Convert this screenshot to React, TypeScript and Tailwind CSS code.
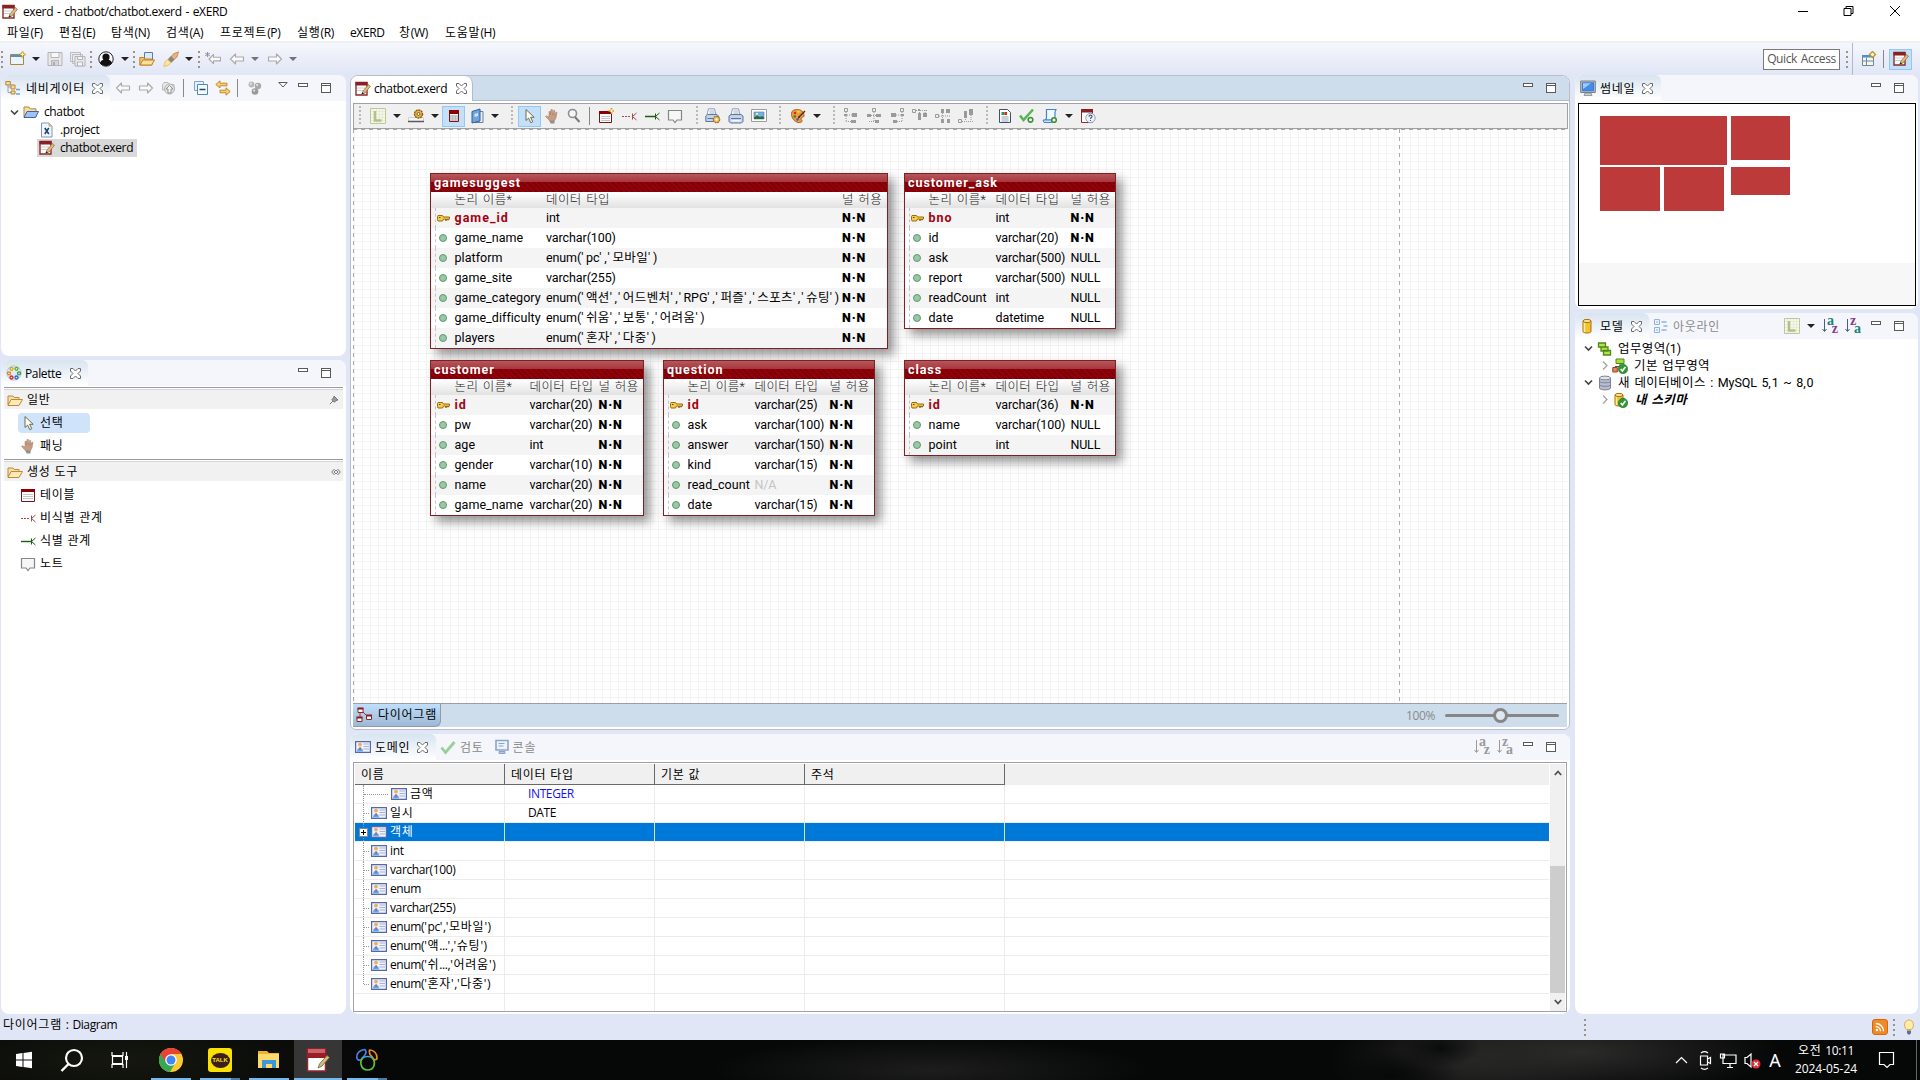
import React from "react";

type Kids = { children?: React.ReactNode };

/* ---------- text ---------- */

// Hangul, spaces, quotes and Latin runs get their own tracking to keep an even rhythm.
function T({ s, c = "" }: { s: string; c?: string }) {
  const runs = s.split(/([\uac00-\ud7a3]+|'+| +)/).filter(Boolean);
  return (
    <span className={"whitespace-pre " + c}>
      {runs.map((r, i) => (
        <span
          key={i}
          className={
            /[\uac00-\ud7a3]/.test(r)
              ? "tracking-[0.75px]"
              : r[0] === "'"
                ? "tracking-[0.6px]"
                : r[0] === " "
                  ? "tracking-[0.7px]"
                  : "tracking-[-0.38px]"
          }
        >
          {r}
        </span>
      ))}
    </span>
  );
}

// Wide variant used in the diagram and the model tree.
function G({ s, c = "" }: { s: string; c?: string }) {
  const runs = s.split(/([\uac00-\ud7a3]+|'|,| +)/).filter(Boolean);
  return (
    <span className={"font-['Roboto','Noto_Sans_CJK_KR',sans-serif] text-[12.5px] whitespace-pre " + c}>
      {runs.map((r, i) => (
        <span
          key={i}
          className={
            /[\uac00-\ud7a3]/.test(r)
              ? "tracking-[0.4px]"
              : r === "'"
                ? "tracking-[2.6px]"
                : r === ","
                  ? "tracking-[1px]"
                  : r[0] === " "
                    ? "tracking-[1.4px]"
                    : "tracking-[-0.1px]"
          }
        >
          {r}
        </span>
      ))}
    </span>
  );
}

/* ---------- icons (16 x 16 unless noted) ---------- */

function Svg({ c = "", children }: { c?: string } & Kids) {
  return (
    <svg viewBox="0 0 16 16" className={"block h-4 w-4 shrink-0 " + c} fill="none">
      {children}
    </svg>
  );
}

const Pencil = () => (
  <>
    <path d="M7 13l1-3 5.5-6.5 2 1.7L10 12z" fill="#e3b878" stroke="#8a6a3c" strokeWidth=".7" />
    <path d="M6.5 13.6l.9-2.4 1.6 1.4z" fill="#222" />
  </>
);

const art: Record<string, React.ReactNode> = {
  exerd: (
    <>
      <path d="M1 1.500h11v12.500H1z" fill="#fff" stroke="#8c2a2e" strokeWidth="1.400" />
      <path d="M.5 1h12v3.500H.5z" fill="#8a1f24" />
      <path d="M2 7h8M2 9.500h6" stroke="#ccc" />
      <Pencil />
    </>
  ),
  newWin: (
    <>
      <path d="M.5 3.500h13v10H.5z" fill="#eaf4fd" stroke="#a8893f" />
      <path d="M1 4h12v2H1z" fill="#4a90d4" />
      <path d="M12.500 .5v6M9.500 3.500h6" stroke="#b58b1e" strokeWidth="2" />
      <path d="M12.500 1.500v4M10.500 3.500h4" stroke="#fff3a8" />
    </>
  ),
  save: (
    <>
      <path d="M1 1.500h14v13H1z" fill="#e8e8ea" stroke="#b4b4b8" />
      <path d="M4 1.500h8v5H4z" fill="#f8f8f8" stroke="#b4b4b8" />
      <path d="M4.500 9.500h7v5h-7z" fill="#d6d6d8" stroke="#b4b4b8" />
      <path d="M6 11h2v3H6z" fill="#aaa" />
    </>
  ),
  saveAll: (
    <>
      <path d="M.5 1.500h10v9H.5zM2.500 3.500h10v9h-10z" fill="#ececee" stroke="#bcbcc0" />
      <path d="M5 5.500h10v9.500H5z" fill="#e8e8ea" stroke="#b4b4b8" />
      <path d="M7.500 5.500h5v3h-5zM7.500 11h5v4h-5z" fill="#f4f4f4" stroke="#b4b4b8" />
    </>
  ),
  person: (
    <>
      <circle cx="8" cy="8" r="7.200" fill="#fff" stroke="#222" />
      <path d="M2 11.500a7 7 0 0 1 12 0A7 7 0 0 1 2 11.500z" fill="#111" />
      <circle cx="8" cy="6" r="3.600" fill="#111" />
    </>
  ),
  openFolder: (
    <>
      <path d="M5.500 1.500h8v8h-8z" fill="#dfeaf7" stroke="#5c7ba8" />
      <path d="M.8 14V6.500h4l1 1.500h7v6z" fill="#f3c66b" stroke="#b9822e" />
      <path d="M1 14l2.800-5h11.700l-2.800 5z" fill="#ffdf95" stroke="#b9822e" />
    </>
  ),
  rocket: (
    <>
      <path d="M15.500 .8l-5 2-5 6 2.500 2.500 6-5.300z" fill="#e8b27a" stroke="#b98450" strokeWidth=".8" />
      <path d="M5 8l3-3 3.500 3.500-3 3z" fill="#8d8580" />
      <path d="M4.500 8.500l3.300 3.200-2 2.300-5 1.500L2 11z" fill="#ffe59a" stroke="#e0b050" strokeWidth=".7" />
    </>
  ),
  back: <path d="M1.500 8l5-5v3h8v4h-8v3z" fill="#fafafa" stroke="#a9a9a9" strokeWidth="1.100" strokeLinejoin="round" />,
  fwd: <path d="M14.500 8l-5-5v3h-8v4h8v3z" fill="#fafafa" stroke="#a9a9a9" strokeWidth="1.100" strokeLinejoin="round" />,
  backStar: (
    <>
      <path d="M4 8l4.500-4.500v2.800h7v3.600h-7v2.800z" fill="#fafafa" stroke="#a9a9a9" strokeWidth="1.100" strokeLinejoin="round" />
      <path d="M2.500 1v5M.2 2.200l4.600 2.600M.2 4.800l4.600-2.600" stroke="#8a8a8a" strokeWidth=".9" />
    </>
  ),
  nav: (
    <>
      <path d="M3 5v7.500h4M3 7h3" stroke="#8aa3c8" />
      <path d="M.8 1.500h4.500v3.500H.8zM6 5h4v4H6zM6 11h4v3H6z" fill="#f7dc9b" stroke="#b78436" />
      <path d="M11 9.500h4M11 14h4" stroke="#68a6dc" strokeWidth="1.500" />
    </>
  ),
  folderUp: (
    <>
      <path d="M1.500 10V4.500l1.500-2h4l1.500 2h4.500V10z" fill="#e9e9e9" stroke="#b9b9b9" />
      <circle cx="8.500" cy="9" r="5" fill="#e2e2e2" stroke="#b0b0b0" />
      <path d="M8.500 5.500l3.500 3.500h-2v4h-3V9H5z" fill="#f6f6f6" stroke="#929292" />
    </>
  ),
  collapse: (
    <>
      <path d="M1.500 1.500h9v9h-9z" fill="#e8f1fb" stroke="#7ea6cf" />
      <path d="M4.500 4.500h10v10h-10z" fill="#f6fbff" stroke="#4f87bd" />
      <path d="M6.500 9.500h6" stroke="#1c4a80" strokeWidth="1.500" />
    </>
  ),
  link: (
    <>
      <path d="M.8 4.500L5 .8v2.400h7v2.600H5V8z" fill="#f6cf75" stroke="#b98323" strokeWidth=".9" />
      <path d="M15.200 11.500L11 7.800v2.400H5v2.600h6v2.400z" fill="#f6cf75" stroke="#b98323" strokeWidth=".9" />
    </>
  ),
  balls: (
    <>
      <circle cx="4.500" cy="4.500" r="3" fill="#b9b9b9" />
      <circle cx="11" cy="6" r="3.200" fill="#a9a9a9" />
      <circle cx="8" cy="11.500" r="3.300" fill="#9a9a9a" />
      <circle cx="3.800" cy="3.800" r="1" fill="#eee" />
      <circle cx="10.200" cy="5" r="1" fill="#eee" />
      <circle cx="7.200" cy="10.500" r="1" fill="#eee" />
    </>
  ),
  blueFolder: (
    <>
      <path d="M1 13V3h5l1 1.800h6V13z" fill="#f8dda0" stroke="#b08a3c" />
      <path d="M1 13.500L4 7.500h11.500L12.500 13.500z" fill="#9fc3f5" stroke="#3c62a8" />
    </>
  ),
  xfile: (
    <>
      <path d="M2.500 1h7.500l3 3v11h-10.500z" fill="#f1f6fc" stroke="#8196ae" />
      <path d="M10 1v3h3" fill="#e8cf96" stroke="#b59a5c" strokeWidth=".8" />
      <path d="M5.800 6l4 6M9.800 6l-4 6" stroke="#1f4478" strokeWidth="1.600" />
    </>
  ),
  palDots: (
    <>
      <circle cx="8" cy="8" r="7.200" fill="#dceaf8" stroke="#a5c0dd" strokeWidth=".8" />
      <circle cx="5.500" cy="3.800" r="1.500" stroke="#e0a800" strokeWidth="1.300" />
      <circle cx="10.500" cy="3.800" r="1.500" stroke="#5fae1d" strokeWidth="1.300" />
      <circle cx="3" cy="8.300" r="1.500" stroke="#e88016" strokeWidth="1.300" />
      <circle cx="13" cy="8.300" r="1.500" stroke="#2f9a3f" strokeWidth="1.300" />
      <circle cx="5.500" cy="12.500" r="1.500" stroke="#d22" strokeWidth="1.300" />
      <circle cx="10.500" cy="12.500" r="1.500" stroke="#2a5fd0" strokeWidth="1.300" />
    </>
  ),
  folder: (
    <>
      <path d="M1 13V4h5l1.300 1.500H12V8" fill="#f6dfa6" stroke="#bb8a3a" />
      <path d="M1 13.500L4 7.500h11.500L12 13.500z" fill="#ffe9b5" stroke="#bb8a3a" />
    </>
  ),
  cursor: <path d="M4 1.500v11l2.600-2.400 2.200 4.600 2-1-2.200-4.400h3.600z" fill="#fffde8" stroke="#6b6b5c" strokeLinejoin="round" />,
  hand: (
    <>
      <path d="M5 12L1.500 8.500l1-.8L5 9V3.500h1.300V7L7 1.500h1.300l.3 5.500L9.600 2.200l1.200.2-.3 5L12 4l1 .4-1 5.600-2 3.500H6z" fill="#c79c80" stroke="#a07a62" strokeWidth=".5" />
      <path d="M5.500 12.500h5V15.500h-4z" fill="#8d8f94" />
    </>
  ),
  magnifier: (
    <>
      <circle cx="6.500" cy="5.500" r="4" fill="#f3f6f9" stroke="#8d8d8d" strokeWidth="1.600" />
      <path d="M9 9l4.500 5" stroke="#7a7a7a" strokeWidth="2" />
    </>
  ),
  table: (
    <>
      <path d="M1.500 2.500h13v12h-13z" fill="#fff" stroke="#7c1216" />
      <path d="M1 2h14v3H1z" fill="#8b0000" />
      <path d="M3 7.500h10M3 9.500h10M3 11.500h10" stroke="#c4c4c4" />
    </>
  ),
  tableNew: (
    <>
      <path d="M1.500 3.500h12v11h-12z" fill="#fff" stroke="#7c1216" />
      <path d="M1 3h13v3H1z" fill="#8b0000" />
      <path d="M3 8.500h9M3 10.500h9M3 12.500h9" stroke="#c4c4c4" />
      <path d="M13.500 0v6M10.500 3h6" stroke="#c89a26" strokeWidth="1.600" />
      <path d="M13.500 1.500v3M12 3h3" stroke="#fff4b5" />
    </>
  ),
  tableSel: (
    <>
      <path d="M3.500 2.500h9v11h-9z" fill="#fff" stroke="#7c1216" />
      <path d="M3 2h10v4H3z" fill="#8b0000" />
      <path d="M4 8h8M4 10h8M4 12h8" stroke="#999" />
      <path d="M6.500 7v6M9.500 7v6" stroke="#b4b4b4" strokeWidth=".6" />
    </>
  ),
  nonIdent: (
    <>
      <path d="M1 8.500h9" stroke="#a04a4a" strokeDasharray="2 1" />
      <path d="M11.500 5.500v6M15.500 5l-4 3.500 4 3.500" stroke="#a04a4a" />
    </>
  ),
  ident: (
    <>
      <path d="M1 8.500h10" stroke="#1d5c12" strokeWidth="1.400" />
      <path d="M11.500 5.500v6M15.500 5l-4 3.500 4 3.500" stroke="#1d5c12" />
    </>
  ),
  note: <path d="M1.500 2.500h13v9.500H10L8 14.500 6 12H1.500z" fill="#f6f6f6" stroke="#868686" strokeWidth="1.200" />,
  L: (
    <>
      <path d="M.5 .5h15v15H.5z" fill="#f4f8e8" stroke="#bcc89c" />
      <path d="M3.500 1v14M6.500 1v14M9.500 1v14M12.500 1v14M1 3.500h14M1 6.500h14M1 9.500h14M1 12.500h14" stroke="#dfe6cd" strokeWidth=".6" />
      <path d="M5 3v9.500h6.500" stroke="#b3c08e" strokeWidth="2.400" />
    </>
  ),
  domainGear: (
    <>
      <path d="M.5 9.500h15v4H.5z" fill="#f6f6f6" stroke="#d2d2d2" />
      <path d="M0 13.500h16" stroke="#5b5b5b" strokeWidth="1.400" />
      <circle cx="10.500" cy="6" r="4" fill="#eeb548" stroke="#8a5a12" strokeWidth="1.400" strokeDasharray="2 .6" />
      <circle cx="10.500" cy="6" r="1.500" fill="#fff" stroke="#8a5a12" />
    </>
  ),
  book: (
    <>
      <path d="M6 3.500h8v11H6z" fill="#e8eef6" stroke="#6c7f96" />
      <path d="M3 3.500L11 1v12l-8 2z" fill="#6ea5df" stroke="#2f5e97" />
      <path d="M5.500 6l3.500-1v3l-3.500 1z" fill="#cfe3f7" />
    </>
  ),
  printer: (
    <>
      <path d="M4.500 .8h6l1.500 6H3z" fill="#fff" stroke="#8a9cb4" />
      <path d="M1 8l2-1.500h10L15 8v5.500l-1.500 1.500h-11L1 13.500z" fill="#c3d3e8" stroke="#5b77a0" />
      <path d="M3 10.500h10" stroke="#5b77a0" />
      <path d="M3.500 12h9v1.500h-9z" fill="#f4f8fd" />
      <path d="M5.500 3h4.500M5.500 5h5" stroke="#9aa9bd" strokeWidth=".9" />
    </>
  ),
  printerGear: (
    <>
      <path d="M3.500 .8h6l1.500 6H2z" fill="#fff" stroke="#8a9cb4" />
      <path d="M.8 8l1.700-1.500h9.500L13.500 8v5.500H.8z" fill="#c3d3e8" stroke="#5b77a0" />
      <path d="M2.500 10.500h8" stroke="#5b77a0" />
      <path d="M4.500 3H9M4.500 5h5" stroke="#9aa9bd" strokeWidth=".9" />
      <circle cx="11.500" cy="11.500" r="3.200" fill="#f0c266" stroke="#9c6b20" strokeWidth="1.200" strokeDasharray="1.800 .6" />
      <circle cx="11.500" cy="11.500" r="1.100" fill="#fff" />
    </>
  ),
  image: (
    <>
      <path d="M.5 1.500h15v12H.5z" fill="#fff" stroke="#9c9c9c" />
      <path d="M3 4h10v7H3z" fill="#6fb2e6" stroke="#6a7788" strokeWidth=".6" />
      <path d="M3 11V9.500l3-2 3 1.500 2-1 2 1.500V11z" fill="#2d6a3a" />
      <circle cx="6" cy="5.800" r="1.100" fill="#fff5b0" />
    </>
  ),
  paint: (
    <>
      <path d="M3 2.500c4-2 9-1 10.500 2.500 1.500 3.500 0 4-1.500 4.500s-1 2 0 3-1.500 2.500-4 2c-4-.8-6.500-5-6.500-8 0-2 .5-3.300 1.500-4z" fill="#ef9a3c" stroke="#9a4c12" strokeWidth=".8" />
      <circle cx="5" cy="5" r="1.200" fill="#d22" />
      <circle cx="4.800" cy="8.500" r="1.200" fill="#2c8a2c" />
      <circle cx="7.500" cy="11.500" r="1.300" fill="#3564c8" />
      <circle cx="8.500" cy="3.600" r="1.100" fill="#ffe14d" />
      <path d="M15 3L8.500 9.500" stroke="#4b2f18" strokeWidth="1.500" />
      <path d="M9 8.300l1 1L7.500 11z" fill="#222" />
    </>
  ),
  doc: (
    <>
      <path d="M2.500 1.500h8l3 3v10h-11z" fill="#fff" stroke="#3f5168" />
      <path d="M4.500 4h3v3h-3z" fill="#2f9a3f" />
      <path d="M7.500 4h2.500v3H7.500z" fill="#d22" />
      <path d="M4.500 9h7M4.500 11h7M4.500 13h7" stroke="#8896a8" strokeWidth=".9" />
    </>
  ),
  checkGear: (
    <>
      <path d="M1 7.500l3.500 4.500L14 1.500" stroke="#58b558" strokeWidth="2.600" />
      <circle cx="11.500" cy="11.800" r="2.300" fill="#f2f8ee" stroke="#3f8f3a" strokeWidth="1.600" />
    </>
  ),
  scrollGear: (
    <>
      <path d="M4.500 1.500h10c-1.500.5-1.500 2-1.500 3V12H3.500c1-1 1-2 1-3z" fill="#f2f8fe" stroke="#3f86d0" strokeWidth="1.200" />
      <path d="M1 12h8.500v2.500H2z" fill="#cfe3f7" stroke="#3f86d0" />
      <circle cx="12" cy="12" r="2.300" fill="#f2f8ee" stroke="#3f8f3a" strokeWidth="1.600" />
    </>
  ),
  help: (
    <>
      <path d="M1.500 1.500h11v13h-11z" fill="#fff" stroke="#8c2a2e" />
      <path d="M1 1h12v3.500H1z" fill="#8a1f24" />
      <circle cx="10.500" cy="10" r="4.700" fill="#eef3f8" stroke="#8fa0b4" />
      <path d="M9 8.700c0-2 3-2 3-.2 0 1.200-1.500 1-1.500 2.500M10.500 12v1" stroke="#44618a" strokeWidth="1.200" />
    </>
  ),
  monitor: (
    <>
      <path d="M.7 1h14.600v11.500H.7z" fill="#b9c0c8" stroke="#767f8a" />
      <path d="M2.500 2.800h11v8h-11z" fill="#3f8bf0" stroke="#2a57a8" strokeWidth=".6" />
      <path d="M3 3.300h8L3 9z" fill="#9ecbff" />
      <path d="M5 13h6l1 2.500H4z" fill="#c9ced4" stroke="#767f8a" strokeWidth=".7" />
    </>
  ),
  cyl: (
    <>
      <path d="M4 3v10.500c0 2 8 2 8 0V3z" fill="#f4c22c" stroke="#a86f10" />
      <path d="M5.500 4v10" stroke="#fff0a8" strokeWidth="1.500" />
      <ellipse cx="8" cy="3" rx="4" ry="1.600" fill="#ffe98e" stroke="#a86f10" />
    </>
  ),
  outline: (
    <>
      <path d="M1.500 1.500h5v5h-5zM1.500 9.500h5v5h-5z" fill="#eef4fb" stroke="#8fb4da" />
      <path d="M8.500 4h5M8.500 12h5M10.500 8h4" stroke="#8fb4da" strokeWidth="1.300" />
      <path d="M3 4h2M3 12h2" stroke="#8fb4da" />
    </>
  ),
  domains: (
    <>
      <path d="M.6 2.600h14.800v10.800H.6z" fill="#eef1fb" stroke="#5568a8" strokeWidth="1.200" />
      <path d="M8.500 5h5.500M8.500 7.500h5.500M8.500 10h5.500" stroke="#a9b3d0" />
      <circle cx="5" cy="5.600" r="1.900" fill="#e6b162" />
      <path d="M2 12.600c0-5 6-5 6 0z" fill="#5fa8e6" />
      <path d="M4.600 8h.9v3h-.9z" fill="#d33" />
    </>
  ),
  check: <path d="M1.500 8.500l4 5L14.500 3" stroke="#9cce9c" strokeWidth="2.800" />,
  console: (
    <>
      <path d="M2 1.500h12v9.500H2z" fill="#eef3fb" stroke="#8ca4cc" strokeWidth="1.600" />
      <path d="M4.500 4.500h6M4.500 7h5" stroke="#8ca4cc" />
      <path d="M5 12.500h6v2H5z" fill="#b5c5df" stroke="#8ca4cc" />
    </>
  ),
  diagram: (
    <>
      <path d="M4 5v5M6 4l5 5" stroke="#a33" strokeWidth="1" />
      <path d="M2 1.500h5v4H2zM1 10.500h5v4H1zM10.500 8.500h5v4h-5z" fill="#fff" stroke="#932326" />
      <path d="M1.500 1.500h6M.5 10.500h6M10 8.500h6" stroke="#8b1a1e" strokeWidth="1.800" />
    </>
  ),
  green3: (
    <>
      <path d="M1.500 2h7v4h-7zM4 6h7v4H4zM6.500 9.500h7v4.500h-7z" fill="#b6e04e" stroke="#4c8a14" strokeWidth="1.300" />
    </>
  ),
  greenOk: (
    <>
      <path d="M4 1h8v4.500H4z" fill="#a6dc3f" stroke="#4c8a14" />
      <path d="M8 5.500v3M3 8.500h6" stroke="#555" />
      <path d="M.8 9.500h4.500v4.500H.8z" fill="#e08a5e" stroke="#a3401a" />
      <circle cx="11" cy="11" r="4.700" fill="#2f9a35" stroke="#17661c" strokeWidth=".6" />
      <path d="M8.700 11l1.700 2 3-4" stroke="#fff" strokeWidth="1.600" />
    </>
  ),
  db: (
    <>
      <path d="M2.500 3v10c0 2.500 11 2.500 11 0V3z" fill="#b7bdcc" stroke="#7d8498" />
      <path d="M2.500 6.300c0 2 11 2 11 0M2.500 9.800c0 2 11 2 11 0" stroke="#7d8498" />
      <ellipse cx="8" cy="3" rx="5.500" ry="1.900" fill="#e0e3ec" stroke="#7d8498" />
    </>
  ),
  cylOk: (
    <>
      <path d="M3 3v9.500c0 2 8 2 8 0V3z" fill="#f4c22c" stroke="#a86f10" />
      <path d="M4.500 4v9" stroke="#fff0a8" strokeWidth="1.400" />
      <ellipse cx="7" cy="3" rx="4" ry="1.600" fill="#ffe98e" stroke="#a86f10" />
      <circle cx="11" cy="11" r="4.700" fill="#2f9a35" stroke="#17661c" strokeWidth=".6" />
      <path d="M8.700 11l1.700 2 3-4" stroke="#fff" strokeWidth="1.600" />
    </>
  ),
  perspective: (
    <>
      <path d="M1.500 4.500h11v10h-11z" fill="#f4f8e0" stroke="#6b86a8" />
      <path d="M1 4h12v2.500H1z" fill="#4a90d4" />
      <path d="M5.500 6.500v8M1.500 10h11" stroke="#6b86a8" />
      <path d="M11.500 .5L14.500 3.500 11.500 6.500 8.500 3.500z" fill="#fff6cf" stroke="#c09425" strokeWidth="1.300" />
    </>
  ),
  rss: (
    <>
      <rect x=".5" y=".5" width="15" height="15" rx="2.500" fill="#f08a24" stroke="#d8660c" />
      <circle cx="5" cy="11" r="1.300" fill="#fff" />
      <path d="M3.800 7.500a4.700 4.700 0 0 1 4.700 4.700M3.800 4.500a7.700 7.700 0 0 1 7.700 7.700" stroke="#fff" strokeWidth="1.400" />
    </>
  ),
  bulb: (
    <>
      <path d="M5.500 10.500C2 7 3.500 1 8 1s6 6 2.500 9.500z" fill="#fdeeb0" stroke="#e3a84a" />
      <path d="M6 11.500h4v2.500l-1 1.500H7l-1-1.500z" fill="#5d7184" />
    </>
  ),
};

type IconName = keyof typeof art;
const I = ({ n, c = "" }: { n: IconName; c?: string }) => <Svg c={c}>{art[n]}</Svg>;

const Caret = ({ c = "" }: { c?: string }) => (
  <svg viewBox="0 0 8 4" className={"block h-1 w-2 shrink-0 fill-[#222] " + c}>
    <path d="M0 0h8L4 4z" />
  </svg>
);

const Dots = ({ c = "" }: { c?: string }) => (
  <svg viewBox="0 0 2 18" className={"block h-[18px] w-[2px] shrink-0 fill-[#9b9484] " + c}>
    <path d="M0 1h2v2H0zM0 6h2v2H0zM0 11h2v2H0zM0 16h2v2H0z" />
  </svg>
);

const Grip = ({ c = "" }: { c?: string }) => (
  <svg viewBox="0 0 2 20" className={"block h-5 w-[2px] shrink-0 fill-[#b9b9b9] " + c}>
    <path d="M0 0h2v2H0zM0 4h2v2H0zM0 8h2v2H0zM0 12h2v2H0zM0 16h2v2H0z" />
  </svg>
);

const CloseX = ({ c = "" }: { c?: string }) => (
  <svg viewBox="0 0 11 11" className={"block h-[11px] w-[11px] shrink-0 " + c} fill="#fff" stroke="#6a6a6a" strokeWidth="1">
    <path d="M.5 .5h2.500l2.500 2.500L8 .5h2.500V3L8 5.500l2.500 2.500v2.500H8L5.500 8 3 10.500H.5V8L3 5.500.5 3z" />
  </svg>
);

const MinMax = ({ c = "" }: { c?: string }) => (
  <div className={"flex items-start gap-[13px] " + c}>
    <div className="h-1 w-[10px] border border-[#5a5a5a] bg-white" />
    <div className="h-[10px] w-[10px] border border-t-[3px] border-double border-[#5a5a5a] bg-white" />
  </div>
);

const Sort = ({ a, b, gray = false, c = "" }: { a: string; b: string; gray?: boolean; c?: string }) => (
  <div className={"flex h-4 w-4 shrink-0 " + c}>
    <svg viewBox="0 0 5 16" className={gray ? "h-4 w-[5px] fill-none stroke-[#9a9a9a]" : "h-4 w-[5px] fill-none stroke-[#44607e]"}>
      <path d="M2.500 1v12M.5 11l2 2.500 2-2.500" />
    </svg>
    <div className="-mt-px flex w-[11px] flex-col font-['Liberation_Serif'] text-[14px] leading-[8px] font-bold">
      <span className={gray ? "text-[#9a9a9a]" : a === "a" ? "text-[#21807a]" : "text-[#8a3a92]"}>{a}</span>
      <span className={(gray ? "text-[#9a9a9a]" : b === "a" ? "text-[#21807a]" : "text-[#8a3a92]") + " text-right"}>{b}</span>
    </div>
  </div>
);

// Each glyph pairs an outlined anchor box with solid boxes joined by dotted lines.
const alignArt = [
  { box: "M1.500 .5h3v3h-3z", solid: "M9 5h5v4H9zM1 6h3v2H1zM8 12h5v3H8z", dots: "M3 4v9M4 7h5M3 13.500h5" },
  { box: "M6.500 .5h3v3h-3z", solid: "M1 6h4v3H1zM10 6h5v3h-5zM9 12h4v3H9z", dots: "M8 4v10M5 7.500h5M3 13.500h5" },
  { box: "M11.500 .5h3v3h-3z", solid: "M2 5h5v4H2zM12 6h3v2h-3zM4 12h4v3H4z", dots: "M13 4v10M7 7h5M8 13.500h5" },
  { box: "M.5 1.500h3v3h-3z", solid: "M6 5h3v7H6zM11 5h4v4h-4zM6 1h2v2H6z", dots: "M4 2.500h11M7.500 2v4M13 2v4" },
  { box: "M.5 6.500h3v3h-3z", solid: "M6 1h3v4H6zM11 1h4v4h-4zM6 11h3v4H6zM12 11h3v4h-3z", dots: "M4 8h11M7.500 5v6" },
  { box: "M.5 11.500h3v3h-3z", solid: "M6 3h3v7H6zM11 1h4v6h-4z", dots: "M4 13.500h11M7.500 9v4M13 7v6" },
];
const Align = ({ k, c = "" }: { k: number; c?: string }) => (
  <svg viewBox="0 0 16 16" className={"block h-4 w-4 shrink-0 " + c} fill="none" stroke="#9a9a9a">
    <path d={alignArt[k].dots} strokeDasharray="1 1" />
    <path d={alignArt[k].box} />
    <path d={alignArt[k].solid} fill="#9a9a9a" stroke="none" />
  </svg>
);

const Chevron = ({ open = false, c = "" }: { open?: boolean; c?: string }) => (
  <svg viewBox="0 0 9 9" className={"block h-[9px] w-[9px] shrink-0 " + c} fill="none">
    {open ? <path d="M1 2.500l3.500 3.500L8 2.500" stroke="#444" strokeWidth="1.600" /> : <path d="M3 .5l4 4-4 4" stroke="#a3a3a3" strokeWidth="1.300" />}
  </svg>
);

/* ---------- window chrome ---------- */

const menus = [
  ["파일(F)", "w-[52px]"],
  ["편집(E)", "w-[52px]"],
  ["탐색(N)", "w-[55px]"],
  ["검색(A)", "w-[54px]"],
  ["프로젝트(P)", "w-[77px]"],
  ["실행(R)", "w-[53px]"],
  ["eXERD", "w-[49px]"],
  ["창(W)", "w-[46px]"],
  ["도움말(H)", "w-[60px]"],
];

function TitleBar() {
  return (
    <header className="flex h-[41px] flex-col bg-white">
      <div className="flex h-[22px] items-center pt-px">
        <I n="exerd" c="ml-[2px]" />
        <T s="exerd - chatbot/chatbot.exerd - eXERD" c="ml-[5px] flex-1" />
        <svg viewBox="0 0 104 12" className="mr-[18px] mb-px h-3 w-[104px] fill-none stroke-black">
          <path d="M0 6.500h10" />
          <path d="M46 3.500h7v7h-7zM48 3V1.500h7v7h-2" />
          <path d="M92 1l10 10M102 1L92 11" />
        </svg>
      </div>
      <nav className="flex h-[19px] items-center pt-[2px] pl-[7px]">
        {menus.map(([m, w]) => (
          <span key={m} className={w}>
            <T s={m} />
          </span>
        ))}
      </nav>
    </header>
  );
}

function MainToolbar() {
  return (
    <div className="flex h-[34px] items-center border-t-2 border-[#f0f0f0] bg-linear-to-b from-[#f5f7fc] to-[#e1e6f6]">
      <Dots c="ml-[1px]" />
      <I n="newWin" c="ml-[7px]" />
      <Caret c="ml-[6px]" />
      <I n="save" c="ml-[7px]" />
      <I n="saveAll" c="ml-[7px]" />
      <Dots c="ml-1" />
      <I n="person" c="ml-[6px]" />
      <Caret c="ml-[7px]" />
      <Dots c="ml-1" />
      <I n="openFolder" c="ml-[4px]" />
      <I n="rocket" c="ml-2" />
      <Caret c="ml-[6px]" />
      <Dots c="ml-[5px]" />
      <I n="backStar" c="ml-[5px]" />
      <I n="back" c="ml-2" />
      <Caret c="ml-[6px] opacity-60" />
      <I n="fwd" c="ml-2" />
      <Caret c="ml-[6px] opacity-60" />
      <div className="ml-auto flex h-[21px] w-[77px] items-center justify-center border border-[#7a7a7a] bg-white text-[#555]">
        <T s="Quick Access" />
      </div>
      <Dots c="ml-[6px]" />
      <div className="ml-1 h-8 w-px bg-[#b4b8c6]" />
      <I n="perspective" c="ml-2" />
      <div className="ml-[6px] h-[18px] w-px bg-[#888]" />
      <div className="mr-2 ml-[5px] flex h-[21px] w-[23px] items-center justify-center border border-[#90c8f6] bg-[#c4e0f9]">
        <I n="exerd" />
      </div>
    </div>
  );
}

const tabBg = "flex h-[26px] shrink-0 items-center rounded-t-md bg-linear-to-b from-[#d8e4f0] to-white";
const panel = "flex flex-col overflow-hidden rounded-lg bg-white";
const head = "flex h-[26px] shrink-0 items-center bg-[#f4f6fb]";

/* ---------- left column ---------- */

function Navigator() {
  return (
    <section className={panel + " h-[281px]"}>
      <div className={head}>
        <div className={tabBg + " w-[109px]"}>
          <I n="nav" c="ml-1" />
          <T s="네비게이터" c="ml-[5px] pt-[2px]" />
          <CloseX c="ml-[7px]" />
        </div>
        <I n="back" c="ml-[5px]" />
        <I n="fwd" c="ml-[7px]" />
        <I n="folderUp" c="ml-[7px]" />
        <div className="ml-[6px] h-[18px] w-px bg-[#888]" />
        <I n="collapse" c="ml-[9px]" />
        <I n="link" c="ml-[6px]" />
        <div className="ml-[6px] h-[18px] w-px bg-[#888]" />
        <I n="balls" c="ml-[9px]" />
        <svg viewBox="0 0 10 6" className="mb-[6px] ml-[15px] h-[6px] w-[10px] fill-white stroke-[#5a5a5a]">
          <path d="M.8 .5h8.400L5 5z" />
        </svg>
        <MinMax c="ml-[10px]" />
      </div>
      <div className="flex flex-col pt-[2px]">
        <div className="flex h-[18px] items-center">
          <Chevron open c="ml-[9px]" />
          <I n="blueFolder" c="ml-1" />
          <T s="chatbot" c="ml-[5px]" />
        </div>
        <div className="flex h-[18px] items-center">
          <I n="xfile" c="ml-[38px]" />
          <T s=".project" c="ml-[5px]" />
        </div>
        <div className="ml-[36px] flex h-[18px] w-[100px] items-center bg-[#d9d9d9]">
          <I n="exerd" c="ml-[2px]" />
          <T s="chatbot.exerd" c="ml-[5px]" />
        </div>
      </div>
    </section>
  );
}

function PaletteGroup({ label, pin, children }: { label: string; pin: React.ReactNode } & Kids) {
  return (
    <div className="mx-[3px] flex flex-col border-t border-[#9a9a9a] pt-px">
      <div className="flex h-[20px] items-center border-t border-[#d6d6d6] bg-[#f1f1f1]">
        <I n="folder" c="ml-[3px]" />
        <T s={label} c="ml-[4px] flex-1" />
        <span className="mr-[2px]">{pin}</span>
      </div>
      <div className="flex flex-col pt-1">{children}</div>
    </div>
  );
}

function Palette() {
  const item = "flex h-5 items-center mb-[3px]";
  return (
    <section className={panel + " h-[654px]"}>
      <div className={head + " mb-px"}>
        <div className={tabBg + " w-[87px]"}>
          <I n="palDots" c="ml-[5px]" />
          <T s="Palette" c="ml-[3px] pt-px" />
          <CloseX c="ml-[9px]" />
        </div>
        <MinMax c="ml-[210px]" />
      </div>
      <PaletteGroup
        label="일반"
        pin={
          <svg viewBox="0 0 10 10" className="mr-[2px] h-[10px] w-[10px] stroke-[#777]" fill="#999">
            <path d="M5 1l4 4-2 .5-1.500 1.800L2.800 4.500 4.600 3zM4 6L.8 9.200" />
          </svg>
        }
      >
        <div className={item + " ml-[14px] w-[72px] rounded-sm bg-[#cfe3fb]"}>
          <I n="cursor" c="ml-[3px]" />
          <T s="선택" c="ml-[3px]" />
        </div>
        <div className={item + " ml-[14px]"}>
          <I n="hand" c="ml-[2px]" />
          <T s="패닝" c="ml-[4px]" />
        </div>
      </PaletteGroup>
      <PaletteGroup
        label="생성 도구"
        pin={
          <svg viewBox="0 0 10 8" className="h-2 w-[10px] fill-none stroke-[#777]">
            <path d="M3.500 1L.7 4l2.800 3M6.500 1l2.800 3-2.800 3M3 4l2-2 2 2-2 2z" />
          </svg>
        }
      >
        {(
          [
            ["table", "테이블"],
            ["nonIdent", "비식별 관계"],
            ["ident", "식별 관계"],
            ["note", "노트"],
          ] as [IconName, string][]
        ).map(([n, s]) => (
          <div key={s} className={item + " ml-[14px]"}>
            <I n={n} c="ml-[2px]" />
            <T s={s} c="ml-[4px]" />
          </div>
        ))}
      </PaletteGroup>
    </section>
  );
}

/* ---------- diagram ---------- */

type Row = [string, string, string];
type EntityDef = { title: string; box: string; cols: string; rows: Row[] };

const NN = "N·N";
const entities: EntityDef[] = [
  {
    title: "gamesuggest",
    box: "left-[77px] top-[44px] w-[458px]",
    cols: "grid-cols-[23.5px_91.5px_296px_1fr]",
    rows: [
      ["game_id", "int", NN],
      ["game_name", "varchar(100)", NN],
      ["platform", "enum('pc','모바일')", NN],
      ["game_site", "varchar(255)", NN],
      ["game_category", "enum('액션','어드벤처','RPG','퍼즐','스포츠','슈팅')", NN],
      ["game_difficulty", "enum('쉬움','보통','어려움')", NN],
      ["players", "enum('혼자','다중')", NN],
    ],
  },
  {
    title: "customer_ask",
    box: "left-[551px] top-[44px] w-[212px]",
    cols: "grid-cols-[23.5px_67px_75px_1fr]",
    rows: [
      ["bno", "int", NN],
      ["id", "varchar(20)", NN],
      ["ask", "varchar(500)", "NULL"],
      ["report", "varchar(500)", "NULL"],
      ["readCount", "int", "NULL"],
      ["date", "datetime", "NULL"],
    ],
  },
  {
    title: "customer",
    box: "left-[77px] top-[231px] w-[214px]",
    cols: "grid-cols-[23.5px_75px_69px_1fr]",
    rows: [
      ["id", "varchar(20)", NN],
      ["pw", "varchar(20)", NN],
      ["age", "int", NN],
      ["gender", "varchar(10)", NN],
      ["name", "varchar(20)", NN],
      ["game_name", "varchar(20)", NN],
    ],
  },
  {
    title: "question",
    box: "left-[310px] top-[231px] w-[212px]",
    cols: "grid-cols-[23.5px_67px_75px_1fr]",
    rows: [
      ["id", "varchar(25)", NN],
      ["ask", "varchar(100)", NN],
      ["answer", "varchar(150)", NN],
      ["kind", "varchar(15)", NN],
      ["read_count", "N/A", NN],
      ["date", "varchar(15)", NN],
    ],
  },
  {
    title: "class",
    box: "left-[551px] top-[231px] w-[212px]",
    cols: "grid-cols-[23.5px_67px_75px_1fr]",
    rows: [
      ["id", "varchar(36)", NN],
      ["name", "varchar(100)", "NULL"],
      ["point", "int", "NULL"],
    ],
  },
];

const Key = () => (
  <svg viewBox="0 0 13 8" className="ml-[5px] h-2 w-[13px]" fill="#f6cf4a" stroke="#9a6a14" strokeWidth="1">
    <path d="M1 1.500h4.500l1 1.500h6v2h-1v1h-1V5h-1v1.500h-1V5H6.500l-1 2H1L.5 5.500v-3z" />
    <path d="M2 3.500h1.500" stroke="#6b4508" />
  </svg>
);

function Entity({ e }: { e: EntityDef }) {
  return (
    <div className={"absolute border border-[#7e2125] bg-white text-[12.5px] shadow-[6px_6px_10px_rgba(0,0,0,0.42)] " + e.box}>
      <div className="flex h-[18px] items-center bg-[linear-gradient(to_bottom,#b5575c_0,#a8363c_8px,transparent_8px),repeating-linear-gradient(45deg,#930009_0_2px,#7d0006_2px_4px)] pl-[3px] font-bold tracking-[0.95px] text-white">
        {e.title}
      </div>
      <div className={"grid h-4 items-center bg-linear-to-b from-white to-[#e2e2e2] whitespace-pre text-[#222] " + e.cols}>
        <span />
        <G s="논리 이름*" c="font-light" />
        <G s="데이터 타입" c="font-light" />
        <G s="널 허용" c="font-light" />
      </div>
      <div className="bg-white">
        {e.rows.map(([name, type, nul], i) => (
          <div key={name} className={"grid h-5 items-center whitespace-pre " + e.cols + (i % 2 ? " bg-white" : " bg-[#f4f4f4]")}>
            <span className="ml-1 flex h-5 items-center border-l border-dashed border-[#c4c4c4]">
              {i === 0 ? (
                <span className="-ml-1">
                  <Key />
                </span>
              ) : (
                <span className="ml-[3px] h-2 w-2 rounded-full border border-[#5c9a72] bg-[#9cc7a4]" />
              )}
            </span>
            <span className={i === 0 ? "font-bold tracking-[1px] text-[#a50010]" : "tracking-[0.05px]"}>{name}</span>
            <G s={type} c={type === "N/A" ? "text-[#c4c4c4]" : ""} />
            <span className={nul === "NULL" ? "tracking-[-0.2px]" : "font-black tracking-[0.9px]"}>{nul}</span>
          </div>
        ))}
      </div>
    </div>
  );
}

function EditorToolbar() {
  const sel = "flex h-[21px] w-[23px] shrink-0 items-center justify-center border border-[#90c8f6] bg-[#c4e0f9]";
  return (
    <div className="mr-px ml-[2px] mt-[2px] flex h-[26px] shrink-0 items-center border border-[#a0a0a8] bg-[#f0f0f0]">
      <Grip c="ml-[5px]" />
      <I n="L" c="ml-[9px]" />
      <Caret c="ml-[7px]" />
      <I n="domainGear" c="ml-[7px]" />
      <Caret c="ml-[7px]" />
      <div className={sel + " ml-[3px]"}>
        <I n="tableSel" />
      </div>
      <I n="book" c="ml-[4px]" />
      <Caret c="ml-[6px]" />
      <Grip c="ml-[12px]" />
      <div className={sel + " ml-[5px]"}>
        <I n="cursor" />
      </div>
      <I n="hand" c="ml-[3px]" />
      <I n="magnifier" c="ml-[6px]" />
      <div className="ml-[7px] h-[18px] w-px bg-[#888]" />
      <I n="tableNew" c="ml-[8px]" />
      <I n="nonIdent" c="ml-[7px]" />
      <I n="ident" c="ml-[7px]" />
      <I n="note" c="ml-[7px]" />
      <Grip c="ml-[13px]" />
      <I n="printerGear" c="ml-[7px]" />
      <I n="printer" c="ml-[7px]" />
      <I n="image" c="ml-[7px]" />
      <Grip c="ml-[12px]" />
      <I n="paint" c="ml-[9px]" />
      <Caret c="ml-[7px]" />
      <Grip c="ml-[12px]" />
      {[0, 1, 2, 3, 4, 5].map((k) => (
        <Align key={k} k={k} c={k ? "ml-[7px]" : "ml-[8px]"} />
      ))}
      <Grip c="ml-[12px]" />
      <I n="doc" c="ml-[9px]" />
      <I n="checkGear" c="ml-[6px]" />
      <I n="scrollGear" c="ml-[7px]" />
      <Caret c="ml-[7px]" />
      <I n="help" c="ml-[7px]" />
    </div>
  );
}

function Editor() {
  return (
    <section className="flex h-[655px] flex-col overflow-hidden rounded-t-lg rounded-b-md border border-[#b9bdcd] bg-white">
      <div className="flex h-[25px] shrink-0 items-end border-b border-[#b0bac8] bg-[#cdddec]">
        <div className="-mb-px flex h-[25px] w-[122px] items-center rounded-tr-lg border-r border-[#b0bac8] bg-white">
          <I n="exerd" c="ml-[4px]" />
          <T s="chatbot.exerd" c="ml-[3px]" />
          <CloseX c="ml-[9px]" />
        </div>
        <MinMax c="mb-[7px] ml-auto mr-[13px]" />
      </div>
      <EditorToolbar />
      <div className="relative ml-[2px] h-[574px] shrink-0 overflow-hidden bg-[linear-gradient(to_right,#f4f4f4_1px,transparent_1px),linear-gradient(to_bottom,#f4f4f4_1px,transparent_1px)] bg-[size:8px_8px] bg-[position:1px_0px]">
        <div className="absolute inset-x-0 top-0 h-px bg-[repeating-linear-gradient(to_right,#aaa_0_4px,transparent_4px_8px)]" />
        <div className="absolute inset-y-0 left-0 w-px bg-[repeating-linear-gradient(to_bottom,#aaa_0_4px,transparent_4px_8px)]" />
        <div className="absolute inset-y-0 left-[1046px] w-px bg-[repeating-linear-gradient(to_bottom,#aaa_0_4px,transparent_4px_8px)]" />
        <div className="font-['Roboto','Noto_Sans_CJK_KR',sans-serif] text-black">
          {entities.map((e) => (
            <Entity key={e.title} e={e} />
          ))}
        </div>
      </div>
      <div className="mx-[2px] flex h-[24px] shrink-0 items-center border-t border-[#a0a0a0] bg-[#cdddec]">
        <div className="flex h-full w-[88px] items-center rounded-br-md border-r border-b border-[#8f9cad] bg-linear-to-b from-[#bfdffc] to-[#9db8d4]">
          <I n="diagram" c="ml-[3px]" />
          <T s="다이어그램" c="ml-[6px]" />
        </div>
        <T s="100%" c="ml-auto text-[#8a8a8a]" />
        <div className="relative mr-[8px] ml-[10px] h-[3px] w-[114px] rounded bg-[#868686]">
          <div className="absolute top-[-6px] left-[48px] h-[15px] w-[15px] rounded-full border-[3px] border-[#868686] bg-[#dfe7ef]" />
        </div>
      </div>
    </section>
  );
}

/* ---------- domain table ---------- */

const domainCols = "grid grid-cols-[150px_150px_150px_200px_1fr]";
type DomainRow = { name: string; type?: string; child?: boolean; selected?: boolean };
const domainRows: DomainRow[] = [
  { name: "금액", type: "INTEGER", child: true },
  { name: "일시", type: "DATE" },
  { name: "객체", selected: true },
  { name: "int" },
  { name: "varchar(100)" },
  { name: "enum" },
  { name: "varchar(255)" },
  { name: "enum('pc','모바일')" },
  { name: "enum('액...','슈팅')" },
  { name: "enum('쉬...,'어려움')" },
  { name: "enum('혼자','다중')" },
];

function DomainLine({ r, last }: { r: DomainRow; last: boolean }) {
  const cell = r.selected ? "border-r border-white/80" : "border-r border-[#ececec]";
  return (
    <div className={domainCols + " h-[19px] border-b " + (r.selected ? "border-[#f0f0f0] bg-[#0078d7] text-white" : "border-[#ececec]")}>
      <div className={cell + " flex items-center"}>
        <div className={"flex h-full w-[9px] shrink-0 justify-end " + (last ? "items-start" : "")}>
          <span className={"w-px border-l border-dotted border-[#999] " + (last ? "h-[9px]" : "h-full")} />
        </div>
        {r.selected ? (
          <span className="-ml-[5px] mr-[3px] flex h-[9px] w-[9px] items-center justify-center border border-[#888] bg-white">
            <svg viewBox="0 0 5 5" className="h-[5px] w-[5px] stroke-black">
              <path d="M0 2.500h5M2.500 0v5" />
            </svg>
          </span>
        ) : (
          <span className={"border-t border-dotted border-[#999] " + (r.child ? "mr-[3px] w-[24px]" : "mr-[2px] w-[5px]")} />
        )}
        <I n="domains" />
        <T s={r.name} c="ml-[3px]" />
      </div>
      <div className={cell + " flex items-center pl-[23px]"}>
        <T s={r.type ?? ""} c={r.child ? "text-[#1414e6]" : ""} />
      </div>
      <div className={cell} />
      <div className={cell} />
      <div />
    </div>
  );
}

function DomainPanel() {
  return (
    <section className={panel + " h-[280px]"}>
      <div className={head}>
        <div className={tabBg + " w-[86px]"}>
          <I n="domains" c="ml-[5px]" />
          <T s="도메인" c="ml-[4px] pt-[2px]" />
          <CloseX c="ml-[7px]" />
        </div>
        <I n="check" c="ml-[4px]" />
        <T s="검토" c="ml-[4px] pt-[2px] text-[#8a8a8a]" />
        <I n="console" c="ml-[10px]" />
        <T s="콘솔" c="ml-[3px] pt-[2px] text-[#8a8a8a]" />
        <Sort a="a" b="z" gray c="ml-auto" />
        <Sort a="z" b="a" gray c="ml-[7px]" />
        <MinMax c="ml-[10px] mr-[14px]" />
      </div>
      <div className="mx-[3px] mt-[2px] flex h-[250px] border border-[#a0a0a8] pt-px pl-px">
        <div className="mr-px flex w-[1194px] flex-col">
          <div className="flex h-[21px] shrink-0 bg-[#f0f0f0]">
            <div className="grid w-[650px] grid-cols-[150px_150px_150px_200px] border-b border-[#696969]">
              {["이름", "데이터 타입", "기본 값", "주석"].map((h) => (
                <div key={h} className="flex items-center border-r border-[#696969] pt-px pl-[6px]">
                  <T s={h} />
                </div>
              ))}
            </div>
          </div>
          {domainRows.map((r, i) => (
            <DomainLine key={r.name} r={r} last={i === domainRows.length - 1} />
          ))}
          <div className={domainCols + " h-[17px]"}>
            {[0, 1, 2, 3].map((k) => (
              <div key={k} className="border-r border-[#ececec]" />
            ))}
          </div>
        </div>
        <div className="flex w-[15px] flex-col items-center bg-[#f0f0f0]">
          <svg viewBox="0 0 8 6" className="mt-[6px] mb-[90px] h-[6px] w-2 fill-none stroke-[#505050]" strokeWidth="1.800">
            <path d="M.8 5L4 1.500 7.200 5" />
          </svg>
          <div className="h-[127px] w-[15px] bg-[#cdcdcd]" />
          <svg viewBox="0 0 8 6" className="mt-[6px] h-[6px] w-2 fill-none stroke-[#505050]" strokeWidth="1.800">
            <path d="M.8 1L4 4.500 7.200 1" />
          </svg>
        </div>
      </div>
    </section>
  );
}

/* ---------- right column ---------- */

const miniBoxes = [
  "left-[21px] top-[12px] w-[127px] h-[49px]",
  "left-[152px] top-[12px] w-[59px] h-[44px]",
  "left-[21px] top-[63px] w-[60px] h-[44px]",
  "left-[85px] top-[63px] w-[60px] h-[44px]",
  "left-[152px] top-[63px] w-[59px] h-[28px]",
];

function Thumbnail() {
  return (
    <section className={panel + " h-[234px]"}>
      <div className={head}>
        <div className={tabBg + " w-[86px]"}>
          <I n="monitor" c="ml-[5px]" />
          <T s="썸네일" c="ml-[4px] pt-[2px]" />
          <CloseX c="ml-[7px]" />
        </div>
        <MinMax c="ml-auto mr-[14px]" />
      </div>
      <div className="mr-[2px] ml-[3px] mt-[2px] flex h-[203px] flex-col border border-black">
        <div className="relative h-[159px]">
          {miniBoxes.map((b) => (
            <div key={b} className={"absolute bg-[#bc3a3a] " + b} />
          ))}
        </div>
        <div className="flex-1 bg-[#f7f7f7]" />
      </div>
    </section>
  );
}

function Model() {
  const row = "flex h-[17px] items-center";
  return (
    <section className={panel + " h-[701px]"}>
      <div className={head}>
        <div className={tabBg + " w-[74px]"}>
          <I n="cyl" c="ml-[4px]" />
          <T s="모델" c="ml-[5px] pt-[2px]" />
          <CloseX c="ml-[7px]" />
        </div>
        <I n="outline" c="ml-[4px]" />
        <T s="아웃라인" c="ml-[4px] pt-[2px] text-[#8a8a8a]" />
        <I n="L" c="ml-auto" />
        <Caret c="ml-[7px]" />
        <Sort a="a" b="z" c="ml-[7px]" />
        <Sort a="z" b="a" c="ml-[7px]" />
        <MinMax c="ml-[10px] mr-[14px]" />
      </div>
      <div className="flex flex-col pt-[1px]">
        <div className={row}>
          <Chevron open c="ml-[9px]" />
          <I n="green3" c="ml-[4px]" />
          <G s="업무영역(1)" c="ml-[5px]" />
        </div>
        <div className={row}>
          <Chevron c="ml-[25px]" />
          <I n="greenOk" c="ml-[3px]" />
          <G s="기본 업무영역" c="ml-[6px]" />
        </div>
        <div className={row}>
          <Chevron open c="ml-[9px]" />
          <I n="db" c="ml-[4px]" />
          <G s="새 데이터베이스 : MySQL 5,1 ~ 8,0" c="ml-[5px]" />
        </div>
        <div className={row}>
          <Chevron c="ml-[25px]" />
          <I n="cylOk" c="ml-[3px]" />
          <G s="내 스키마" c="ml-[7px] font-bold italic" />
        </div>
      </div>
    </section>
  );
}

/* ---------- bottom ---------- */

function StatusBar() {
  return (
    <div className="flex h-[26px] items-center">
      <T s="다이어그램 : Diagram" c="ml-[3px] mb-[4px]" />
      <Dots c="ml-auto" />
      <I n="rss" c="ml-[286px]" />
      <Dots c="ml-[5px]" />
      <I n="bulb" c="ml-[6px] mr-[3px]" />
    </div>
  );
}

function Taskbar() {
  const bar = "h-[2px] bg-[#76b9ed]";
  return (
    <footer className="flex h-10 items-stretch bg-[radial-gradient(ellipse_70px_26px_at_1390px_36px,#070808,transparent),radial-gradient(ellipse_40px_20px_at_1440px_8px,#0a0b0b,transparent),radial-gradient(ellipse_200px_44px_at_1580px_12px,#2b2c2a,transparent),radial-gradient(ellipse_140px_60px_at_1470px_20px,#232422,transparent),radial-gradient(ellipse_220px_34px_at_930px_30px,#1c1d1c,transparent),radial-gradient(ellipse_260px_60px_at_120px_20px,#15170f,transparent)] bg-[#060707] text-white">
      <svg viewBox="0 0 144 40" className="h-10 w-[144px]" fill="none">
        <path d="M16 14l6.500-1v6.500H16zM23.500 12.900l8.500-1.200v7.800h-8.500zM16 20.500h6.500V27l-6.500-1zM23.500 20.500H32v7.800l-8.500-1.200z" fill="#fff" />
        <circle cx="74" cy="18" r="8" stroke="#fff" strokeWidth="2.200" />
        <path d="M68.500 24L61.500 31" stroke="#fff" strokeWidth="2.400" />
        <path d="M112 12v3.500h11V12M112 28v-3.500h11V28M112.500 16.500h10v7h-10zM126.500 12v16" stroke="#fff" strokeWidth="1.200" />
        <path d="M125 16h3v4h-3z" fill="#fff" />
      </svg>
      <div className="flex w-[54px] flex-col items-center justify-between pt-2">
        <svg viewBox="0 0 24 24" className="h-6 w-6">
          <circle cx="12" cy="12" r="12" fill="#fcc934" />
          <path d="M1.600 6A12 12 0 0 0 11 24l5.500-9.500L12 12z" fill="#34a853" />
          <path d="M1.600 6L7 15l5-3V6h10.400A12 12 0 0 0 1.600 6z" fill="#ea4335" />
          <circle cx="12" cy="12" r="5.800" fill="#fff" />
          <circle cx="12" cy="12" r="4.500" fill="#4285f4" />
        </svg>
        <div className={bar + " w-10"} />
      </div>
      <div className="flex w-[44px] flex-col items-center justify-between pt-2">
        <div className="flex h-6 w-6 items-center justify-center rounded-[3px] bg-[#fae100]">
          <div className="flex h-[15px] w-[19px] items-center justify-center rounded-[50%] bg-[#3b1e1e] font-['Liberation_Sans'] text-[6px] font-bold text-[#fae100]">
            TALK
          </div>
        </div>
        <div className="flex w-10">
          <div className={bar + " w-[31px]"} />
          <div className="h-[2px] flex-1 bg-[#4f7da0]" />
        </div>
      </div>
      <div className="flex w-[52px] flex-col items-center justify-between pt-2">
        <svg viewBox="0 0 24 24" className="ml-[2px] h-6 w-6">
          <path d="M1 3h9l2 2h10v15H1z" fill="#f0b32e" />
          <path d="M1 6h21v14H1z" fill="#ffd96b" />
          <path d="M5 20v-8h14v8h-4v-4H9v4z" fill="#3b97d8" />
        </svg>
        <div className={bar + " ml-[2px] w-10"} />
      </div>
      <div className="flex w-12 flex-col items-center justify-between bg-[#363636] pt-2">
        <svg viewBox="0 0 24 24" className="h-6 w-6">
          <path d="M1.500 1h18v22h-18z" fill="#fff" stroke="#8c2a2e" strokeWidth="1.500" />
          <path d="M1 0h19v10H1z" fill="#9c1c26" />
          <path d="M2 1h17v4H2z" fill="#c4646b" />
          <path d="M12 20l1.500-4L21 7.500l2.500 2L16 18z" fill="#cfc07e" stroke="#6e6330" strokeWidth=".8" />
        </svg>
        <div className={bar + " w-12"} />
      </div>
      <div className="flex w-[50px] flex-col items-center justify-between pt-2">
        <svg viewBox="0 0 24 24" className="h-6 w-6" fill="none" strokeWidth="1.700" strokeLinejoin="round">
          <path d="M6.500 11.500C4 12.800 2 12 1.800 9.500 1.500 5 5 1.800 10 1.500c1.500 2 .8 4.500-.5 6-1 1-2 2-3 4z" stroke="#4a80ea" />
          <path d="M14.500 2c4.500 0 8 4 7.500 8.500-.3 1.500-2.500 1.500-3.500.5C17.500 8.500 16 8 15 6.500c-.8-1.500-.8-3-.5-4.500z" stroke="#ef8a1d" />
          <path d="M7.500 10c-3 3.500-2 12 5 12s8.500-7.500 5-12" stroke="#5cc23a" />
          <path d="M7.500 10c2.500-2 7.500-2 10 0" stroke="#3fa8d8" />
        </svg>
        <div className="flex w-10">
          <div className={bar + " w-[31px]"} />
          <div className="h-[2px] flex-1 bg-[#4f7da0]" />
        </div>
      </div>
      <svg viewBox="0 0 92 40" className="ml-auto h-10 w-[92px]" fill="none" stroke="#fff" strokeWidth="1.200">
        <path d="M1 23l5.500-5.500L12 23" />
        <path d="M25.500 16h7v9h-7zM32.500 19l3-1.500v6l-3-1.500M26 13c2-1.500 5-1.500 7 0M26 28c2 1.500 5 1.500 7 0" />
        <path d="M48 15h13v8.500H48zM55 24v3M52 27.500h6M45.500 14h4v4h-4z" fill="#0b0c0c" />
        <path d="M70 17.500h2l4-3.500v13l-4-3.500h-2z" />
        <circle cx="81" cy="24" r="4.500" fill="#e02b3a" stroke="none" />
        <path d="M79 22l4 4M83 22l-4 4" />
      </svg>
      <span className="ml-px flex w-[14px] items-center justify-center font-['Noto_Sans'] text-[18px]">A</span>
      <div className="ml-[10px] flex w-[68px] flex-col items-center pt-[2px] leading-[18px]">
        <T s="오전 10:11" />
        <span className="tracking-[-0.05px]">2024-05-24</span>
      </div>
      <svg viewBox="0 0 42 40" className="ml-[18px] h-10 w-[42px]" fill="none" stroke="#fff" strokeWidth="1.200">
        <path d="M1.500 12.500h14v12H12l-3 3-3-3H1.500z" />
        <path d="M38.500 0v40" stroke="#666" strokeWidth="1" />
      </svg>
    </footer>
  );
}

export default function App() {
  return (
    <div className="flex h-[1080px] w-[1920px] flex-col overflow-hidden bg-[#e1e6f6] font-['Open_Sans','Noto_Sans_CJK_KR',sans-serif] text-[12px] leading-[16px] text-black">
      <TitleBar />
      <MainToolbar />
      <main className="flex h-[939px] px-px">
        <div className="flex w-[345px] flex-col gap-1">
          <Navigator />
          <Palette />
        </div>
        <div className="ml-1 flex w-[1220px] flex-col gap-1">
          <Editor />
          <DomainPanel />
        </div>
        <div className="ml-[5px] flex w-[343px] flex-col gap-1">
          <Thumbnail />
          <Model />
        </div>
      </main>
      <StatusBar />
      <Taskbar />
    </div>
  );
}
